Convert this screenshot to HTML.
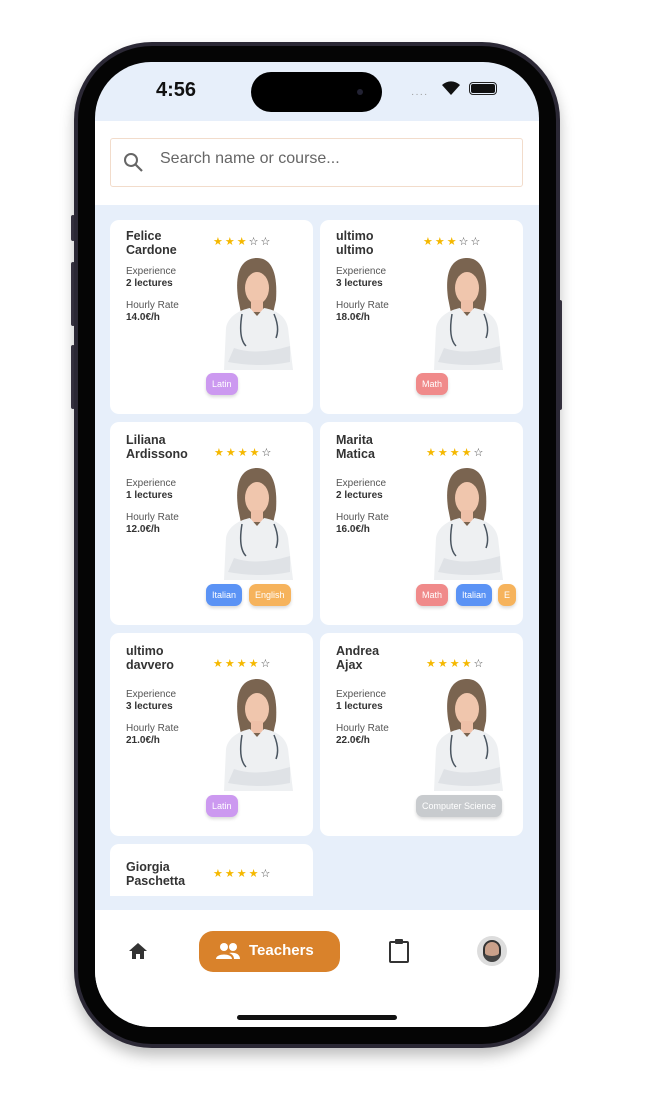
<!DOCTYPE html>
<html><head><meta charset="utf-8"><style>
*{margin:0;padding:0;box-sizing:border-box}
body{width:649px;height:1093px;background:#fff;position:relative;overflow:hidden;font-family:"Liberation Sans",sans-serif}
.frame{position:absolute;left:74px;top:42px;width:486px;height:1006px;border-radius:78px;background:#2b2835;box-shadow:0 8px 14px rgba(0,0,0,.25)}
.frame2{position:absolute;left:78px;top:46px;width:478px;height:998px;border-radius:74px;background:#050505}
.screen{position:absolute;left:95px;top:62px;width:444px;height:965px;border-radius:56px;overflow:hidden;background:#e7effa}
.btn{position:absolute;background:#3a3645;width:4px;border-radius:2px}
.abs{position:absolute}
.card{position:absolute;width:203px;height:194px;background:#fff;border-radius:9px;overflow:hidden}
.nm{position:absolute;left:16px;top:9px;font-weight:bold;font-size:12.5px;line-height:14px;color:#333}
.st{position:absolute;left:103px;top:15px;font-size:11px;letter-spacing:2px;color:#f5b800}
.st b{color:#444;font-weight:normal}
.lb{position:absolute;left:16px;font-size:10px;color:#555}
.vl{position:absolute;left:16px;font-size:10px;font-weight:bold;color:#333}
.ch{position:absolute;top:153px;height:22px;border-radius:7px;color:#fff;font-size:9px;line-height:22px;text-align:center;padding:0 6px;box-shadow:0 2px 3px rgba(0,0,0,.15)}
.pic{position:absolute;left:110px;top:38px;width:73px;height:112px}
</style></head><body>
<svg width="0" height="0" style="position:absolute"><symbol id="doc" viewBox="0 0 73 112">
<path d="M18 40 C14 10 24 0 37 0 C50 0 58 12 56 42 L52 60 L22 60Z" fill="#7a6450"/>
<ellipse cx="37" cy="30" rx="12" ry="16" fill="#f0c6ad"/>
<rect x="31" y="42" width="12" height="12" fill="#eec0a8"/>
<path d="M4 112 L6 70 C8 58 20 52 30 50 L37 58 L44 50 C56 52 66 58 68 70 L73 112Z" fill="#eef0f2"/>
<path d="M14 90 Q37 98 70 88 L70 104 Q40 110 8 104Z" fill="#dfe2e6"/>
<path d="M22 56 Q18 80 26 88 M54 56 Q60 70 56 80" stroke="#4a5560" stroke-width="1.5" fill="none"/>
</symbol></svg>
<div class="btn" style="left:71px;top:215px;height:26px"></div>
<div class="btn" style="left:71px;top:262px;height:64px"></div>
<div class="btn" style="left:71px;top:345px;height:64px"></div>
<div class="btn" style="left:558px;top:300px;height:110px"></div>
<div class="frame"></div><div class="frame2"></div>
<div class="screen">
 <div class="abs" style="left:61px;top:17px;font-size:20px;font-weight:bold;color:#111">4:56</div>
 <div class="abs" style="left:156px;top:10px;width:131px;height:40px;border-radius:20px;background:#000"></div>
 <div class="abs" style="left:262px;top:27px;width:6px;height:6px;border-radius:3px;background:#223"></div>
 <div class="abs" style="left:316px;top:27px;font-size:10px;color:#999;letter-spacing:1px">····</div>
 <svg class="abs" style="left:346px;top:18px" width="20" height="16" viewBox="0 0 20 16"><path d="M10 15 L1 5 A13 13 0 0 1 19 5Z" fill="#111"/></svg>
 <div class="abs" style="left:374px;top:20px;width:28px;height:13px;border:1.5px solid #222;border-radius:4px;padding:1px"><div style="background:#111;width:100%;height:100%;border-radius:2px"></div></div>
 <div class="abs" style="left:0;top:59px;width:444px;height:84px;background:#fff"></div>
 <div class="abs" style="left:15px;top:76px;width:413px;height:49px;border:1px solid #f2dccb;border-radius:3px;background:#fff"></div>
 <svg class="abs" style="left:28px;top:90px" width="22" height="22" viewBox="0 0 22 22"><circle cx="8" cy="8" r="6" stroke="#666" stroke-width="2" fill="none"/><path d="M12.5 12.5 L19 19" stroke="#666" stroke-width="2.2"/></svg>
 <div class="abs" style="left:65px;top:88px;font-size:16px;color:#666">Search name or course...</div>

 <div class="card" style="left:15px;top:158px"><div class="nm">Felice<br>Cardone</div><div class="st">★★★<b>☆☆</b></div>
  <div class="lb" style="top:46px">Experience</div><div class="vl" style="top:58px">2 lectures</div><div class="lb" style="top:80px">Hourly Rate</div><div class="vl" style="top:92px">14.0€/h</div>
  <svg class="pic"><use href="#doc"/></svg><div class="ch" style="left:96px;background:#cc99f0">Latin</div></div>
 <div class="card" style="left:225px;top:158px"><div class="nm">ultimo<br>ultimo</div><div class="st">★★★<b>☆☆</b></div>
  <div class="lb" style="top:46px">Experience</div><div class="vl" style="top:58px">3 lectures</div><div class="lb" style="top:80px">Hourly Rate</div><div class="vl" style="top:92px">18.0€/h</div>
  <svg class="pic"><use href="#doc"/></svg><div class="ch" style="left:96px;background:#f08a8a">Math</div></div>

 <div class="card" style="left:15px;top:360px;height:203px"><div class="nm" style="top:11px">Liliana<br>Ardissono</div><div class="st" style="left:104px;top:24px">★★★★<b>☆</b></div>
  <div class="lb" style="top:56px">Experience</div><div class="vl" style="top:68px">1 lectures</div><div class="lb" style="top:90px">Hourly Rate</div><div class="vl" style="top:102px">12.0€/h</div>
  <svg class="pic" style="top:46px"><use href="#doc"/></svg><div class="ch" style="top:162px;left:96px;background:#5b93f5">Italian</div><div class="ch" style="top:162px;left:139px;background:#f6b35c">English</div></div>
 <div class="card" style="left:225px;top:360px;height:203px"><div class="nm" style="top:11px">Marita<br>Matica</div><div class="st" style="left:106px;top:24px">★★★★<b>☆</b></div>
  <div class="lb" style="top:56px">Experience</div><div class="vl" style="top:68px">2 lectures</div><div class="lb" style="top:90px">Hourly Rate</div><div class="vl" style="top:102px">16.0€/h</div>
  <svg class="pic" style="top:46px"><use href="#doc"/></svg><div class="ch" style="top:162px;left:96px;background:#f08a8a">Math</div><div class="ch" style="top:162px;left:136px;background:#5b93f5">Italian</div><div class="ch" style="top:162px;left:178px;background:#f6b35c">E</div></div>

 <div class="card" style="left:15px;top:571px;height:203px"><div class="nm" style="top:11px">ultimo<br>davvero</div><div class="st" style="top:24px">★★★★<b>☆</b></div>
  <div class="lb" style="top:56px">Experience</div><div class="vl" style="top:68px">3 lectures</div><div class="lb" style="top:90px">Hourly Rate</div><div class="vl" style="top:102px">21.0€/h</div>
  <svg class="pic" style="top:46px"><use href="#doc"/></svg><div class="ch" style="top:162px;left:96px;background:#cc99f0">Latin</div></div>
 <div class="card" style="left:225px;top:571px;height:203px"><div class="nm" style="top:11px">Andrea<br>Ajax</div><div class="st" style="left:106px;top:24px">★★★★<b>☆</b></div>
  <div class="lb" style="top:56px">Experience</div><div class="vl" style="top:68px">1 lectures</div><div class="lb" style="top:90px">Hourly Rate</div><div class="vl" style="top:102px">22.0€/h</div>
  <svg class="pic" style="top:46px"><use href="#doc"/></svg><div class="ch" style="top:162px;left:96px;background:#c8cbce">Computer Science</div></div>

 <div class="card" style="left:15px;top:782px;height:52px;border-radius:9px 9px 0 0"><div class="nm" style="top:16px">Giorgia<br>Paschetta</div><div class="st" style="left:103px;top:23px">★★★★<b>☆</b></div></div>

 <div class="abs" style="left:0;top:848px;width:444px;height:117px;background:#fff"></div>
 <svg class="abs" style="left:33px;top:880px" width="20" height="18" viewBox="0 0 20 18"><path d="M10 1 L1 9 H4 V17 H8 V12 H12 V17 H16 V9 H19Z" fill="#333"/></svg>
 <div class="abs" style="left:104px;top:869px;width:141px;height:41px;border-radius:14px;background:#d9822b"></div>
 <svg class="abs" style="left:120px;top:880px" width="26" height="18" viewBox="0 0 26 18"><circle cx="9" cy="5" r="4" fill="#fff"/><circle cx="18" cy="5" r="4" fill="#fff"/><path d="M1 17 C1 11 17 11 17 17Z M14 11 C20 10 25 12 25 17 H19 C19 14 17 12 14 11Z" fill="#fff"/></svg>
 <div class="abs" style="left:154px;top:880px;font-size:15px;font-weight:bold;color:#fff">Teachers</div>
 <svg class="abs" style="left:293px;top:876px" width="22" height="26" viewBox="0 0 22 26"><rect x="2" y="4" width="18" height="20" stroke="#333" stroke-width="2" fill="none" rx="1"/><rect x="7" y="1" width="8" height="5" fill="#333" rx="1"/></svg>
 <div class="abs" style="left:382px;top:874px;width:30px;height:30px;border-radius:15px;background:#ddd;overflow:hidden"><div style="margin:4px auto 0;width:18px;height:22px;border-radius:9px;background:#c9a08a;border:2px solid #333;border-bottom:6px solid #444"></div></div>
 <div class="abs" style="left:142px;top:953px;width:160px;height:5px;border-radius:3px;background:#111"></div>
</div>
</body></html>
